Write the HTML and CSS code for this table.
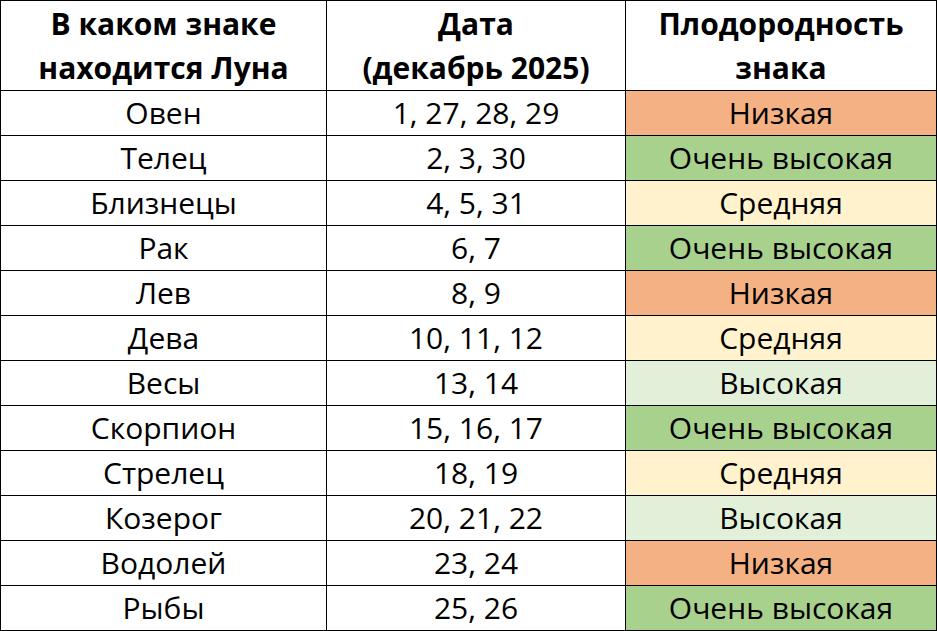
FILE: index.html
```html
<!DOCTYPE html>
<html lang="ru">
<head>
<meta charset="utf-8">
<link rel="stylesheet" href="styles.css">
</head>
<body>
<table class="moon">
  <colgroup>
    <col class="c1"><col class="c2"><col class="c3">
  </colgroup>
  <thead>
    <tr>
      <th>В каком знаке<br>находится Луна</th>
      <th>Дата<br>(декабрь 2025)</th>
      <th>Плодородность<br>знака</th>
    </tr>
  </thead>
  <tbody>
    <tr><td>Овен</td><td>1, 27, 28, 29</td><td class="low">Низкая</td></tr>
    <tr><td>Телец</td><td>2, 3, 30</td><td class="vhigh">Очень высокая</td></tr>
    <tr><td>Близнецы</td><td>4, 5, 31</td><td class="mid">Средняя</td></tr>
    <tr><td>Рак</td><td>6, 7</td><td class="vhigh">Очень высокая</td></tr>
    <tr><td>Лев</td><td>8, 9</td><td class="low">Низкая</td></tr>
    <tr><td>Дева</td><td>10, 11, 12</td><td class="mid">Средняя</td></tr>
    <tr><td>Весы</td><td>13, 14</td><td class="high">Высокая</td></tr>
    <tr><td>Скорпион</td><td>15, 16, 17</td><td class="vhigh">Очень высокая</td></tr>
    <tr><td>Стрелец</td><td>18, 19</td><td class="mid">Средняя</td></tr>
    <tr><td>Козерог</td><td>20, 21, 22</td><td class="high">Высокая</td></tr>
    <tr><td>Водолей</td><td>23, 24</td><td class="low">Низкая</td></tr>
    <tr><td>Рыбы</td><td>25, 26</td><td class="vhigh">Очень высокая</td></tr>
  </tbody>
</table>
</body>
</html>
```
FILE: styles.css
```css
html, body {
  margin: 0;
  padding: 0;
  background: #ffffff;
}
.moon {
  border-collapse: collapse;
  table-layout: fixed;
  width: 936px;
  font-family: "Open Sans", "Noto Sans", sans-serif;
  color: #000000;
}
.c1 { width: 326px; }
.c2 { width: 299px; }
.c3 { width: 311px; }
.moon th, .moon td {
  border: 1px solid #000000;
  text-align: center;
  vertical-align: middle;
  padding: 0;
}
.moon th {
  height: 89px;
  font-size: 30px;
  font-weight: 700;
  line-height: 44px;
}
.moon td {
  height: 44px;
  font-size: 30px;
  line-height: 44px;
}
.low { background: #f4b183; }
.vhigh { background: #a9d18e; }
.mid { background: #fff2cc; }
.high { background: #e2f0d9; }
```
